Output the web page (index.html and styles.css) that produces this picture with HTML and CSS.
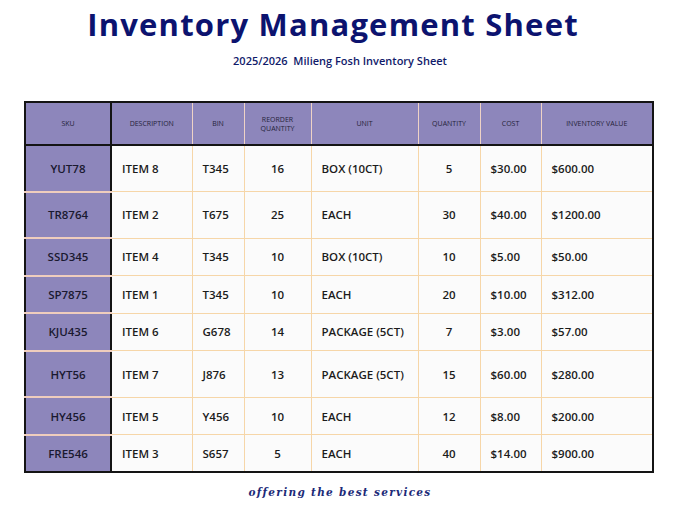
FILE: index.html
```html
<!DOCTYPE html>
<html>
<head>
<meta charset="utf-8">
<link rel="stylesheet" href="styles.css">
</head>
<body>
<div class="page">
  <h1 class="title">Inventory Management Sheet</h1>
  <p class="subtitle">2025/2026&nbsp; Milieng Fosh Inventory Sheet</p>
  <table class="sheet">
    <colgroup>
      <col class="c-sku"><col class="c-desc"><col class="c-bin"><col class="c-re"><col class="c-unit"><col class="c-qty"><col class="c-cost"><col class="c-val">
    </colgroup>
    <thead>
      <tr>
        <th>SKU</th><th>DESCRIPTION</th><th>BIN</th><th>REORDER<br>QUANTITY</th><th>UNIT</th><th>QUANTITY</th><th>COST</th><th>INVENTORY VALUE</th>
      </tr>
    </thead>
    <tbody>
      <tr class="tall"><td class="sku">YUT78</td><td>ITEM 8</td><td>T345</td><td class="c">16</td><td>BOX (10CT)</td><td class="c">5</td><td>$30.00</td><td>$600.00</td></tr>
      <tr class="tall"><td class="sku">TR8764</td><td>ITEM 2</td><td>T675</td><td class="c">25</td><td>EACH</td><td class="c">30</td><td>$40.00</td><td>$1200.00</td></tr>
      <tr class="short"><td class="sku">SSD345</td><td>ITEM 4</td><td>T345</td><td class="c">10</td><td>BOX (10CT)</td><td class="c">10</td><td>$5.00</td><td>$50.00</td></tr>
      <tr class="short"><td class="sku">SP7875</td><td>ITEM 1</td><td>T345</td><td class="c">10</td><td>EACH</td><td class="c">20</td><td>$10.00</td><td>$312.00</td></tr>
      <tr class="short"><td class="sku">KJU435</td><td>ITEM 6</td><td>G678</td><td class="c">14</td><td>PACKAGE (5CT)</td><td class="c">7</td><td>$3.00</td><td>$57.00</td></tr>
      <tr class="tall"><td class="sku">HYT56</td><td>ITEM 7</td><td>J876</td><td class="c">13</td><td>PACKAGE (5CT)</td><td class="c">15</td><td>$60.00</td><td>$280.00</td></tr>
      <tr class="short"><td class="sku">HY456</td><td>ITEM 5</td><td>Y456</td><td class="c">10</td><td>EACH</td><td class="c">12</td><td>$8.00</td><td>$200.00</td></tr>
      <tr class="short"><td class="sku">FRE546</td><td>ITEM 3</td><td>S657</td><td class="c">5</td><td>EACH</td><td class="c">40</td><td>$14.00</td><td>$900.00</td></tr>
    </tbody>
  </table>
  <p class="tagline">offering the best services</p>
</div>
</body>
</html>
```
FILE: styles.css
```css
* { box-sizing: border-box; }
html, body { margin: 0; padding: 0; background: #ffffff; }
.page {
  width: 680px;
  height: 510px;
  display: flex;
  flex-direction: column;
  align-items: center;
  font-family: "Open Sans", "Liberation Sans", sans-serif;
}
.title {
  margin: 3px 0 0 -14px;
  font-family: "Open Sans", sans-serif;
  font-weight: 700;
  font-size: 31px;
  line-height: 42px;
  color: #0c136f;
  letter-spacing: 1.2px;
}
.subtitle {
  margin: 9px 0 0 0;
  font-size: 11px;
  line-height: 14px;
  font-weight: 600;
  color: #101a6a;
}
.sheet {
  margin: 33px 0 0 -2px;
  width: 628px;
  table-layout: fixed;
  border-collapse: collapse;
  border: 2px solid #141414;
  background: #fbfbfb;
}
.c-sku { width: 86px; }
.c-desc { width: 81px; }
.c-bin { width: 52px; }
.c-re { width: 67px; }
.c-unit { width: 107px; }
.c-qty { width: 62px; }
.c-cost { width: 61px; }
.c-val { width: 112px; }

.sheet th {
  height: 43px;
  background: #8d86bb;
  color: #25233a;
  font-size: 7px;
  font-weight: 400;
  line-height: 9px;
  text-align: center;
  border-left: 1px solid #efd3c6;
  border-bottom: 2px solid #141414;
  padding: 0;
}
.sheet th:first-child { border-right: 2px solid #141414; }
.sheet td {
  font-size: 11.5px;
  font-weight: 600;
  color: #1b1b1b;
  padding: 0 0 0 10px;
  border: 1px solid #f6d6a8;
  white-space: nowrap;
}
.sheet tr.tall td { height: 46.5px; }
.sheet tr.short td { height: 37.6px; }
.sheet td.c { text-align: center; padding: 0; }
.sheet td.sku {
  background: #8d86bb;
  text-align: center;
  padding: 0;
  color: #1a1930;
  border-right: 2px solid #141414;
  border-top: 2px solid #efcdbd;
  border-bottom: 2px solid #efcdbd;
}
.sheet tbody tr:last-child td { border-bottom: 2px solid #141414; }
.tagline {
  margin: 13px 0 0 0;
  font-family: "DejaVu Serif", serif;
  font-style: italic;
  font-weight: 700;
  font-size: 10.5px;
  letter-spacing: 1.3px;
  color: #1c2a78;
}
```
